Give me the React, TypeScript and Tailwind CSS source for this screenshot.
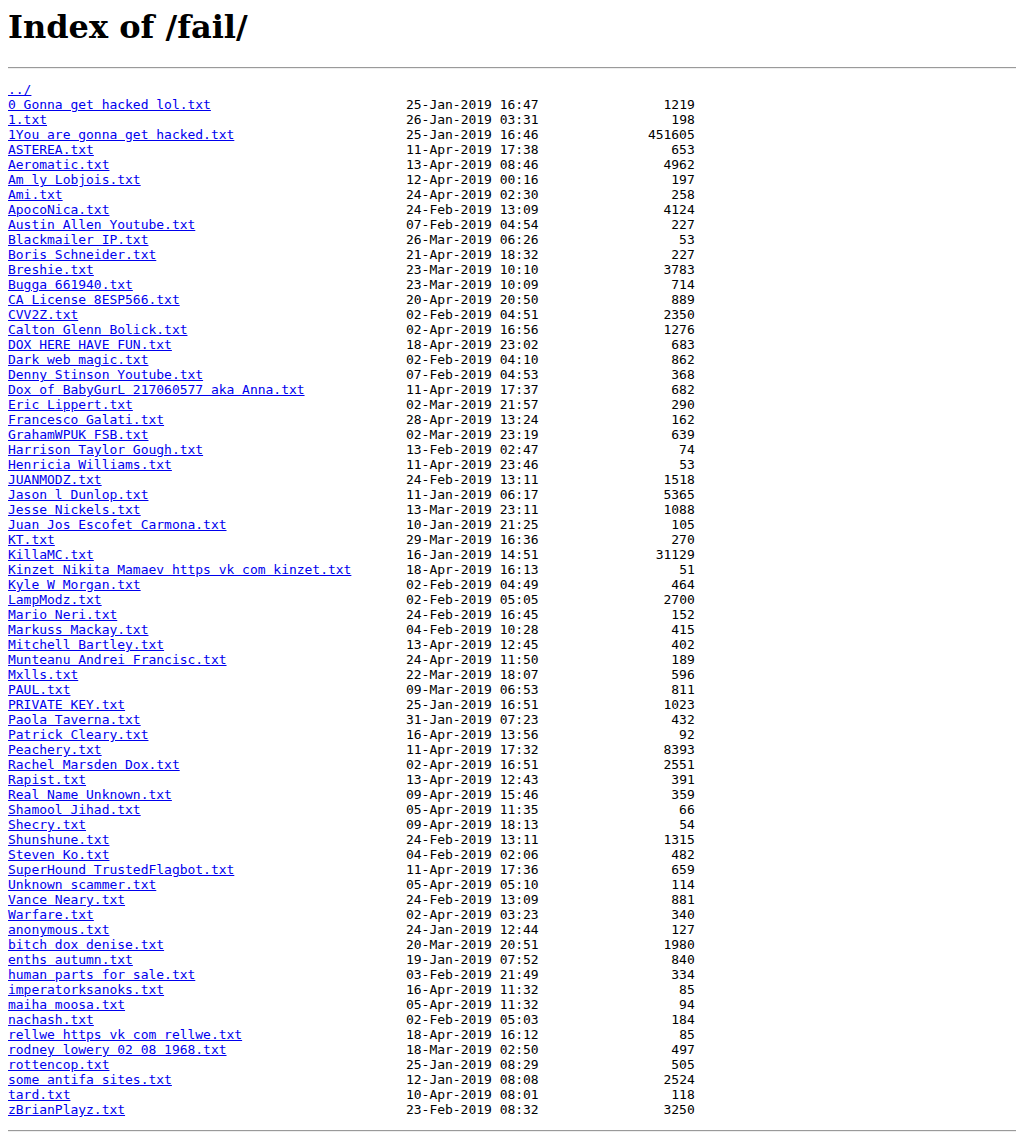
type Entry = {
  name: string;
  date: string;
  size: string;
};

const entries: Entry[] = [
  { name: '0 Gonna get hacked lol.txt', date: '25-Jan-2019 16:47', size: '1219' },
  { name: '1.txt', date: '26-Jan-2019 03:31', size: '198' },
  { name: '1You are gonna get hacked.txt', date: '25-Jan-2019 16:46', size: '451605' },
  { name: 'ASTEREA.txt', date: '11-Apr-2019 17:38', size: '653' },
  { name: 'Aeromatic.txt', date: '13-Apr-2019 08:46', size: '4962' },
  { name: 'Am ly Lobjois.txt', date: '12-Apr-2019 00:16', size: '197' },
  { name: 'Ami.txt', date: '24-Apr-2019 02:30', size: '258' },
  { name: 'ApocoNica.txt', date: '24-Feb-2019 13:09', size: '4124' },
  { name: 'Austin Allen Youtube.txt', date: '07-Feb-2019 04:54', size: '227' },
  { name: 'Blackmailer IP.txt', date: '26-Mar-2019 06:26', size: '53' },
  { name: 'Boris Schneider.txt', date: '21-Apr-2019 18:32', size: '227' },
  { name: 'Breshie.txt', date: '23-Mar-2019 10:10', size: '3783' },
  { name: 'Bugga 661940.txt', date: '23-Mar-2019 10:09', size: '714' },
  { name: 'CA License 8ESP566.txt', date: '20-Apr-2019 20:50', size: '889' },
  { name: 'CVV2Z.txt', date: '02-Feb-2019 04:51', size: '2350' },
  { name: 'Calton Glenn Bolick.txt', date: '02-Apr-2019 16:56', size: '1276' },
  { name: 'DOX HERE HAVE FUN.txt', date: '18-Apr-2019 23:02', size: '683' },
  { name: 'Dark web magic.txt', date: '02-Feb-2019 04:10', size: '862' },
  { name: 'Denny Stinson Youtube.txt', date: '07-Feb-2019 04:53', size: '368' },
  { name: 'Dox of BabyGurL 217060577 aka Anna.txt', date: '11-Apr-2019 17:37', size: '682' },
  { name: 'Eric Lippert.txt', date: '02-Mar-2019 21:57', size: '290' },
  { name: 'Francesco Galati.txt', date: '28-Apr-2019 13:24', size: '162' },
  { name: 'GrahamWPUK FSB.txt', date: '02-Mar-2019 23:19', size: '639' },
  { name: 'Harrison Taylor Gough.txt', date: '13-Feb-2019 02:47', size: '74' },
  { name: 'Henricia Williams.txt', date: '11-Apr-2019 23:46', size: '53' },
  { name: 'JUANMODZ.txt', date: '24-Feb-2019 13:11', size: '1518' },
  { name: 'Jason l Dunlop.txt', date: '11-Jan-2019 06:17', size: '5365' },
  { name: 'Jesse Nickels.txt', date: '13-Mar-2019 23:11', size: '1088' },
  { name: 'Juan Jos Escofet Carmona.txt', date: '10-Jan-2019 21:25', size: '105' },
  { name: 'KT.txt', date: '29-Mar-2019 16:36', size: '270' },
  { name: 'KillaMC.txt', date: '16-Jan-2019 14:51', size: '31129' },
  { name: 'Kinzet Nikita Mamaev https vk com kinzet.txt', date: '18-Apr-2019 16:13', size: '51' },
  { name: 'Kyle W Morgan.txt', date: '02-Feb-2019 04:49', size: '464' },
  { name: 'LampModz.txt', date: '02-Feb-2019 05:05', size: '2700' },
  { name: 'Mario Neri.txt', date: '24-Feb-2019 16:45', size: '152' },
  { name: 'Markuss Mackay.txt', date: '04-Feb-2019 10:28', size: '415' },
  { name: 'Mitchell Bartley.txt', date: '13-Apr-2019 12:45', size: '402' },
  { name: 'Munteanu Andrei Francisc.txt', date: '24-Apr-2019 11:50', size: '189' },
  { name: 'Mxlls.txt', date: '22-Mar-2019 18:07', size: '596' },
  { name: 'PAUL.txt', date: '09-Mar-2019 06:53', size: '811' },
  { name: 'PRIVATE KEY.txt', date: '25-Jan-2019 16:51', size: '1023' },
  { name: 'Paola Taverna.txt', date: '31-Jan-2019 07:23', size: '432' },
  { name: 'Patrick Cleary.txt', date: '16-Apr-2019 13:56', size: '92' },
  { name: 'Peachery.txt', date: '11-Apr-2019 17:32', size: '8393' },
  { name: 'Rachel Marsden Dox.txt', date: '02-Apr-2019 16:51', size: '2551' },
  { name: 'Rapist.txt', date: '13-Apr-2019 12:43', size: '391' },
  { name: 'Real Name Unknown.txt', date: '09-Apr-2019 15:46', size: '359' },
  { name: 'Shamool Jihad.txt', date: '05-Apr-2019 11:35', size: '66' },
  { name: 'Shecry.txt', date: '09-Apr-2019 18:13', size: '54' },
  { name: 'Shunshune.txt', date: '24-Feb-2019 13:11', size: '1315' },
  { name: 'Steven Ko.txt', date: '04-Feb-2019 02:06', size: '482' },
  { name: 'SuperHound TrustedFlagbot.txt', date: '11-Apr-2019 17:36', size: '659' },
  { name: 'Unknown scammer.txt', date: '05-Apr-2019 05:10', size: '114' },
  { name: 'Vance Neary.txt', date: '24-Feb-2019 13:09', size: '881' },
  { name: 'Warfare.txt', date: '02-Apr-2019 03:23', size: '340' },
  { name: 'anonymous.txt', date: '24-Jan-2019 12:44', size: '127' },
  { name: 'bitch dox denise.txt', date: '20-Mar-2019 20:51', size: '1980' },
  { name: 'enths autumn.txt', date: '19-Jan-2019 07:52', size: '840' },
  { name: 'human parts for sale.txt', date: '03-Feb-2019 21:49', size: '334' },
  { name: 'imperatorksanoks.txt', date: '16-Apr-2019 11:32', size: '85' },
  { name: 'maiha moosa.txt', date: '05-Apr-2019 11:32', size: '94' },
  { name: 'nachash.txt', date: '02-Feb-2019 05:03', size: '184' },
  { name: 'rellwe https vk com rellwe.txt', date: '18-Apr-2019 16:12', size: '85' },
  { name: 'rodney lowery 02 08 1968.txt', date: '18-Mar-2019 02:50', size: '497' },
  { name: 'rottencop.txt', date: '25-Jan-2019 08:29', size: '505' },
  { name: 'some antifa sites.txt', date: '12-Jan-2019 08:08', size: '2524' },
  { name: 'tard.txt', date: '10-Apr-2019 08:01', size: '118' },
  { name: 'zBrianPlayz.txt', date: '23-Feb-2019 08:32', size: '3250' },
];

// nginx autoindex: name padded to 50 columns, date, size right-aligned in 20
function rest(e: Entry): string {
  return ' '.repeat(51 - e.name.length) + e.date + e.size.padStart(20, ' ');
}

export default function App() {
  return (
    <div className="min-h-screen bg-white px-2 text-black">
      <h1 className="mt-[9px] mb-[21px] font-['DejaVu_Serif',serif] text-[32px] leading-[37px] font-bold">
        Index of /fail/
      </h1>
      <hr className="h-0 border-0 border-t border-b border-t-[#9a9a9a] border-b-[#eeeeee]" />
      <pre className="mt-[13px] mb-[13px] font-['DejaVu_Sans_Mono',monospace] text-[13px] leading-[15px] tracking-[-0.023px]">
        <a href="../" className="text-[#0000ee] underline">
          ../
        </a>
        {'\n'}
        {entries.map((e) => (
          <span key={e.name}>
            <a href={e.name.replace(/ /g, '_')} className="text-[#0000ee] underline">
              {e.name}
            </a>
            {rest(e) + '\n'}
          </span>
        ))}
      </pre>
      <hr className="h-0 border-0 border-t border-b border-t-[#9a9a9a] border-b-[#eeeeee]" />
    </div>
  );
}
